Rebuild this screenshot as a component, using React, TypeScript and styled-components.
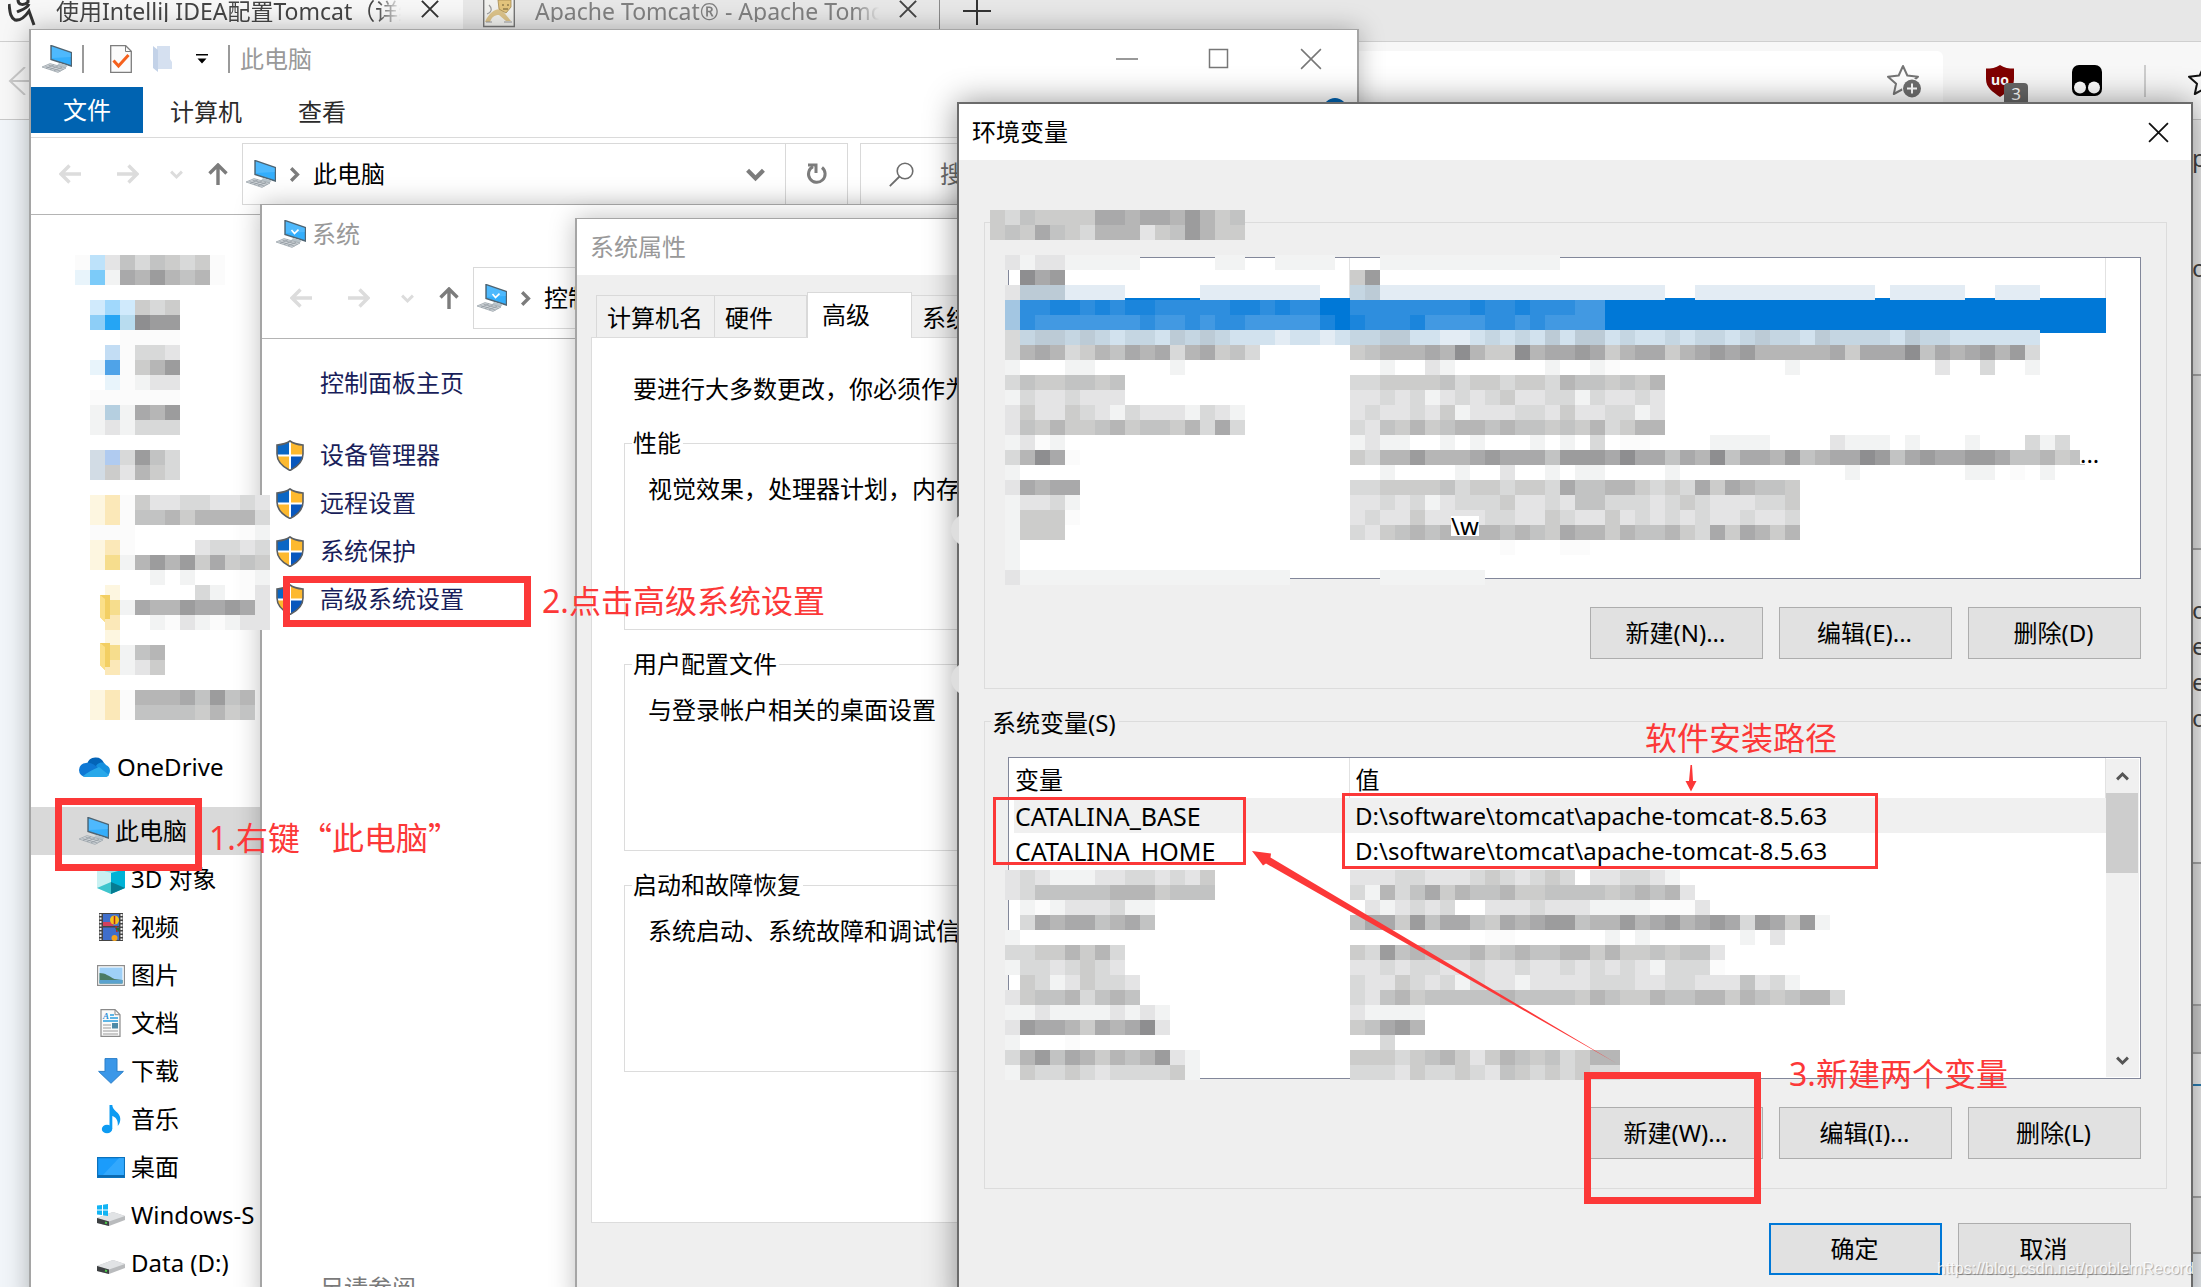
import React from 'react';
import styled, { createGlobalStyle, css } from 'styled-components';

const RED = '#fc3838';
const UI_FONT = '"Noto Sans", "Noto Sans CJK SC", sans-serif';

const GlobalStyle = createGlobalStyle`
  *, *::before, *::after { box-sizing: border-box; }
  html, body { margin: 0; height: 100%; overflow: hidden; }
  #root { height: 100%; }
  body { font-family: ${UI_FONT}; font-size: 24px; line-height: 32px; color: #000; }
  button, input { font: inherit; color: inherit; }
`;

const Desktop = styled.div`
  position: relative;
  min-height: 100vh;
  overflow: hidden;
  background: #f1f5f9;
`;

const IconButton = styled.button<{ $w?: number }>`
  display: flex;
  flex: none;
  align-items: center;
  justify-content: center;
  width: ${(p) => (p.$w ? `${p.$w}px` : 'auto')};
  padding: 0;
  border: 0;
  background: none;
`;

/* ---------- Browser behind the windows ---------- */

const Browser = styled.div`
  display: flex;
  flex-direction: column;
  height: 100vh;
`;

const TabBar = styled.div`
  display: flex;
  flex: none;
  height: 42px;
  background: #e7e7e7;
  border-bottom: 1px solid #cfcfcf;
`;

const Tab = styled.div<{ $active?: boolean }>`
  display: flex;
  align-items: flex-start;
  width: ${(p) => (p.$active ? '463px' : '477px')};
  padding: ${(p) => (p.$active ? '0 24px 0 8px' : '0 22px 0 20px')};
  gap: 20px;
  background: ${(p) => (p.$active ? '#f7f7f7' : 'transparent')};
  color: ${(p) => (p.$active ? '#444' : '#808080')};
  border-right: ${(p) => (p.$active ? '0' : '1px solid #8a8a8a')};
  svg { flex: none; }
`;

const TabTitle = styled.span`
  flex: 1;
  overflow: hidden;
  white-space: nowrap;
  font-size: 23px;
  line-height: 22px;
  mask-image: linear-gradient(to right, #000 93%, transparent 100%);
`;

const AddressRow = styled.div`
  display: flex;
  flex: none;
  align-items: center;
  height: 78px;
  padding-left: 8px;
  background: #f7f7f7;
  border-bottom: 1px solid #c8c8c8;
`;

const AddressField = styled.div`
  display: flex;
  flex: 1;
  align-items: center;
  justify-content: flex-end;
  height: 60px;
  margin-left: 80px;
  padding-right: 22px;
  border-radius: 6px;
  background: #fff;
`;

const Extensions = styled.div`
  display: flex;
  flex: none;
  align-items: center;
  gap: 42px;
  width: 258px;
  padding-left: 43px;
  overflow: hidden;
`;

const ExtensionDivider = styled.span`
  flex: none;
  width: 2px;
  height: 32px;
  background: #cdcdcd;
`;

const PageBody = styled.div`
  display: flex;
  flex: 1;
  justify-content: flex-end;
`;

const PageEdge = styled.div`
  display: flex;
  flex-direction: column;
  width: 9px;
  overflow: hidden;
  color: #444;
`;

const EdgeBlock = styled.div<{ $h: number; $bg?: string; $blue?: boolean }>`
  flex: none;
  height: ${(p) => p.$h}px;
  line-height: 36px;
  background: ${(p) => p.$bg ?? '#e6e6e6'};
  border-bottom: 2px solid ${(p) => (p.$blue ? '#2b7fb5' : '#a8a8a8')};
`;

const EdgeText = styled.div`
  height: 36px;
`;

const EdgeGap = styled.div<{ $h: number }>`
  height: ${(p) => p.$h}px;
`;

/* ---------- Windows ---------- */

const windowBase = css`
  position: absolute;
  display: flex;
  flex-direction: column;
  background: #fff;
  isolation: isolate;
`;

const ExplorerWindow = styled.section`
  ${windowBase}
  left: 29px;
  top: 29px;
  width: 1330px;
  bottom: -20px;
  border: 2px solid #a5a5a5;
  border-top-width: 1px;
  box-shadow: 0 0 24px rgba(0, 0, 0, 0.28);
`;

const SystemWindow = styled.section`
  ${windowBase}
  left: 260px;
  top: 204px;
  width: 1080px;
  bottom: -20px;
  border: 2px solid #a5a5a5;
  border-top-width: 1px;
  box-shadow: 0 0 24px rgba(0, 0, 0, 0.25);
  overflow: hidden;
`;

const PropertiesWindow = styled.section`
  ${windowBase}
  left: 575px;
  top: 218px;
  width: 660px;
  bottom: -20px;
  border: 2px solid #a5a5a5;
  border-top-width: 1px;
  background: #efefef;
  box-shadow: 0 0 24px rgba(0, 0, 0, 0.25);
`;

const EnvironmentWindow = styled.section`
  ${windowBase}
  left: 957px;
  right: 8px;
  top: 102px;
  min-height: 1205px;
  border: 2px solid #6b6b6b;
  background: #efefef;
  box-shadow: 0 0 30px rgba(0, 0, 0, 0.42);
`;

const ExplorerTitle = styled.header`
  display: flex;
  flex: none;
  align-items: center;
  height: 57px;
  padding: 0 35px 0 11px;
  color: #999;
`;

const TitleRule = styled.span<{ $before: number; $after: number }>`
  width: 2px;
  height: 28px;
  margin: 0 ${(p) => p.$after}px 0 ${(p) => p.$before}px;
  background: #9a9a9a;
`;

const WindowControls = styled.div`
  display: flex;
  gap: 70px;
  margin-left: auto;
`;

const Ribbon = styled.nav`
  display: flex;
  flex: none;
  align-items: center;
  height: 51px;
  padding-bottom: 4px;
  border-bottom: 1px solid #dadada;
`;

const FileTab = styled.button`
  width: 112px;
  height: 46px;
  padding: 0;
  border: 0;
  background: #0063b1;
  color: #fff;
`;

const RibbonTab = styled.button`
  padding: 4px 0 0;
  margin-left: 27px;
  margin-right: 29px;
  border: 0;
  background: none;
  color: #2b2b2b;
`;

const HelpDot = styled.button`
  width: 24px;
  height: 24px;
  margin: 0 10px 0 auto;
  padding: 0;
  border: 0;
  border-radius: 50%;
  background: #0063b1;
`;

const NavBar = styled.div`
  display: flex;
  flex: none;
  align-items: center;
  height: 77px;
  padding: 0 0 4px 28px;
  border-bottom: 1px solid #b4b4b4;
`;

const NavArrows = styled.div`
  display: flex;
  align-items: center;
  width: 183px;
  svg { flex: none; }
`;

const NavSlot = styled(IconButton)<{ $gap: number }>`
  margin-right: ${(p) => p.$gap}px;
`;

const PathBox = styled.div<{ $w: number }>`
  display: flex;
  flex: none;
  align-items: center;
  width: ${(p) => p.$w}px;
  height: 62px;
  padding-left: 3px;
  gap: 11px;
  border: 1px solid #d9d9d9;
  white-space: nowrap;
`;

const PathEnd = styled.div`
  display: flex;
  align-items: center;
  height: 100%;
  margin-left: auto;
`;

const RefreshCell = styled(IconButton)`
  width: 62px;
  height: 100%;
  margin-left: 20px;
  border-left: 1px solid #d9d9d9;
`;

const SearchBox = styled.label`
  display: flex;
  flex: 1;
  align-items: center;
  height: 62px;
  margin-left: 12px;
  padding-left: 28px;
  gap: 26px;
  border: 1px solid #d9d9d9;
  input { flex: 1; border: 0; padding: 0; outline: 0; background: none; }
  input::placeholder { color: #6d6d6d; opacity: 1; }
`;

const Sidebar = styled.nav`
  display: flex;
  flex-direction: column;
  width: 231px;
  padding-top: 528px;
`;

const SidebarItem = styled.a<{ $level: number; $selected?: boolean }>`
  display: flex;
  flex: none;
  align-items: center;
  height: 48px;
  margin-bottom: ${(p) => (p.$level === 0 ? 16 : 0)}px;
  padding-left: ${(p) => (p.$level === 2 ? 66 : 48)}px;
  gap: 6px;
  color: #000;
  text-decoration: none;
  white-space: nowrap;
  overflow: hidden;
  background: ${(p) => (p.$selected ? '#d9d9d9' : 'transparent')};
  svg { flex: none; }
`;

const SystemTitle = styled.header`
  display: flex;
  flex: none;
  align-items: center;
  height: 57px;
  padding-left: 14px;
  gap: 6px;
  color: #999;
`;

const SystemLinks = styled.nav`
  display: flex;
  flex-direction: column;
  padding-left: 14px;
`;

const SystemLink = styled.a<{ $home?: boolean }>`
  display: flex;
  align-items: center;
  height: 48px;
  margin: ${(p) => (p.$home ? '20px 0 24px 44px' : '0')};
  gap: 16px;
  color: #191e5a;
  text-decoration: none;
`;

const SeeAlso = styled.div`
  margin: 649px 0 0 58px;
  color: #7a7a7a;
`;

const DialogTitle = styled.header<{ $muted?: boolean }>`
  display: flex;
  flex: none;
  align-items: center;
  justify-content: space-between;
  height: 56px;
  padding: 0 22px 0 13px;
  background: #fff;
  color: ${(p) => (p.$muted ? '#999' : '#000')};
`;

const TabStrip = styled.div`
  display: flex;
  align-items: flex-end;
  height: 62px;
  padding-left: 19px;
`;

const PropTab = styled.button<{ $active?: boolean; $w: number }>`
  flex: none;
  width: ${(p) => p.$w}px;
  height: ${(p) => (p.$active ? 46 : 42)}px;
  margin-bottom: ${(p) => (p.$active ? -1 : 0)}px;
  padding: ${(p) => (p.$active ? '0 0 2px 14px' : '2px 0 0 10px')};
  border: 1px solid #d9d9d9;
  border-bottom: 0;
  border-left-width: ${(p) => (p.$active ? 1 : 0)}px;
  background: ${(p) => (p.$active ? '#fff' : '#f0f0f0')};
  text-align: left;
  white-space: nowrap;
  overflow: hidden;
  z-index: 1;
  &:first-child { border-left-width: 1px; }
`;

const PropPanel = styled.div`
  margin: 0 14px;
  height: 886px;
  padding: 35px 32px 0;
  border: 1px solid #dcdcdc;
  background: #fff;
  white-space: nowrap;
  p { margin: 0 0 22px 9px; }
`;

const PropGroup = styled.fieldset`
  min-width: 0;
  height: 203px;
  margin: 0 0 18px;
  padding: 14px 0 0 23px;
  border: 1px solid #dcdcdc;
  overflow: hidden;
  legend { margin-left: -16px; padding: 0 2px 0 1px; }
`;

const EnvBody = styled.div`
  display: flex;
  flex-direction: column;
  padding: 62px 24px 32px 25px;
`;

const VariableGroup = styled.fieldset<{ $titled?: boolean }>`
  display: flex;
  flex-direction: column;
  min-width: 0;
  margin: ${(p) => (p.$titled ? '16px 0 0' : '0')};
  padding: ${(p) => (p.$titled ? '20px 25px 29px 23px' : '34px 25px 29px 23px')};
  border: 1px solid #dcdcdc;
  legend { margin-left: -17px; padding: 4px 3px 0 1px; line-height: 28px; }
`;

const ListBox = styled.div`
  display: flex;
  height: 322px;
  margin-bottom: 28px;
  padding: 0 1px 1px 5px;
  border: 1px solid #82879a;
  background: #fff;
`;

const ListMain = styled.div`
  flex: 1;
`;

const VariableTable = styled.table`
  width: 100%;
  border-collapse: collapse;
  table-layout: fixed;
  text-align: left;
  white-space: nowrap;
  thead th { height: 40px; padding: 4px 0 0 1px; border-right: 1px solid #e2e2e2; font-weight: 400; }
  thead th:first-child { width: 335px; }
  thead th + th, td { padding-left: 6px; }
  tbody th { padding: 0 0 0 1px; font-weight: 400; font-size: 25px; }
  td { padding-top: 0; padding-bottom: 0; }
`;

const VariableRow = styled.tr<{ $tone?: string }>`
  height: 35px;
  background: ${(p) => p.$tone ?? 'transparent'};
`;

const ScrollTrack = styled.div<{ $visible: boolean }>`
  display: flex;
  flex-direction: column;
  justify-content: space-between;
  width: 33px;
  margin-top: 1px;
  background: ${(p) => (p.$visible ? '#f0f0f0' : 'transparent')};
`;

const ScrollThumb = styled.div`
  width: 32px;
  height: 80px;
  margin-bottom: auto;
  background: #cdcdcd;
`;

const ScrollButton = styled(IconButton)`
  width: 32px;
  height: 34px;
`;

const ButtonRow = styled.div<{ $footer?: boolean }>`
  display: flex;
  justify-content: flex-end;
  gap: 16px;
  margin: ${(p) => (p.$footer ? '34px 36px 0 0' : '0')};
`;

const DialogButton = styled.button<{ $primary?: boolean }>`
  width: 173px;
  height: 52px;
  padding: 0 2px 0 0;
  border: ${(p) => (p.$primary ? '2px solid #0078d7' : '1px solid #adadad')};
  background: #e1e1e1;
`;

/* ---------- Marks drawn over the windows ---------- */

const MarkLayer = styled.div`
  position: absolute;
  inset: 0;
  pointer-events: none;
`;

const MarkBox = styled.div<{ $x: number; $y: number; $w: number; $h: number; $thick?: boolean }>`
  position: absolute;
  left: ${(p) => p.$x}px;
  top: ${(p) => p.$y}px;
  width: ${(p) => p.$w}px;
  height: ${(p) => p.$h}px;
  border: ${(p) => (p.$thick ? 7 : 3)}px solid ${RED};
`;

const MarkText = styled.div<{ $x: number; $y: number }>`
  position: absolute;
  left: ${(p) => p.$x}px;
  top: ${(p) => p.$y}px;
  font-size: 32px;
  line-height: 40px;
  color: ${RED};
  white-space: nowrap;
`;

const WideQuote = styled.span`
  font-family: "Noto Sans CJK SC", sans-serif;
`;

const MarkSvg = styled.svg<{ $x: number; $y: number }>`
  position: absolute;
  left: ${(p) => p.$x}px;
  top: ${(p) => p.$y}px;
`;

const Fragment = styled.span<{ $x: number; $y: number }>`
  position: absolute;
  left: ${(p) => p.$x}px;
  top: ${(p) => p.$y}px;
  background: #fff;
  line-height: 20px;
`;

const Watermark = styled.div`
  position: absolute;
  right: 8px;
  bottom: 6px;
  width: 256px;
  overflow: hidden;
  font-family: "Liberation Sans", sans-serif;
  font-size: 16px;
  line-height: 24px;
  color: rgba(255, 255, 255, 0.85);
  text-shadow: 1px 1px 1px rgba(0, 0, 0, 0.3);
  white-space: nowrap;
`;

/* ---------- Mosaic ---------- */

const SHADES: Record<string, string> = {
  '0': '#8e8e90', '1': '#9c9c9d', '2': '#a9a9aa', '3': '#b6b6b6', '4': '#c2c3c3',
  '5': '#cccccb', '6': '#d8d9d9', '7': '#e4e4e5', '8': '#f2f3f3', '9': '#fbfbfb',
  a: '#e8f4fb', b: '#bde2fa', c: '#7ccbf9', d: '#25a5f4', e: '#d0eafc', f: '#a0d8fc',
  g: '#8dcef7', h: '#b8dcef', i: '#c3ddf4', j: '#4fa3e8', k: '#b5cfe0', l: '#b0cbf0',
  m: '#d2dce5', n: '#fdf6e0', o: '#fbe8b8', q: '#f6dd8d', r: '#0078d7', s: '#1b85dc',
  t: '#2e8ede', u: '#4299e2', v: '#a3c6e2', x: '#c5d6e2', y: '#d2e2ee', z: '#bccbd6',
  A: '#e3ecf4',
};
const CELL = 15;

function Mosaic({ x, y, rows }: { x: number; y: number; rows: string[] }) {
  const cols = Math.max(...rows.map((r) => r.length));
  return (
    <MarkSvg $x={x} $y={y} width={cols * CELL} height={rows.length * CELL} shapeRendering="crispEdges" aria-hidden="true">
      {rows.flatMap((row, r) =>
        [...row].map((c, i) =>
          c === '.' ? null : <rect key={`${r}-${i}`} x={i * CELL} y={r * CELL} width={CELL} height={CELL} fill={SHADES[c]} />,
        ),
      )}
    </MarkSvg>
  );
}

const SIDEBAR_MOSAIC = [
  '9b74645659', 'ac82313439', '', '.efe565', '.gdh011', '...9999', '..i9667', '.aj9531', '..a9877',
  '.999999', '.8k8231', '.878666', '', '.ml6146', '.m57356', '', '.no9577667767', '.no9443533336',
  '.999.......98', '.no9....76676', '.nq8313152545', '.....8.8...98', '..n.....68.97', '..q8233122127',
  '..o..89789877', '..n', '..q843', '..o875', '', '.no933324143', '.no944445354',
];

const LEGEND_MOSAIC = ['56455552232231354', '54524563337541355'];

const USER_NAMES = [
  '787788888.....88..8888', '.021', '7zzzAAAA.....AAAAAAAA', 'vttsststsstttttsststtrr', 'vtuuuuuuutuututtuuuuusr',
  '6xzzxzxyxxyzxzxyyyAyyAy', '63236534232632546', '8...88.....8', '64554454', '86776777', '7577567867778678',
  '7453554354453626', '8798', '63029', '8', '72322', '87768', '85559', '8555', '8', '8', '7888888888888888888',
];

const USER_VALUES = [
  '..888888888888', '51', 'xzAAAAAAAAAAAAAAAAAAA..AAAAAAAAAAAA.AAAAA..AAA', 'ttttttttsttstttuu', 'stttsuuuuttutuuuu',
  'xxzzyyAAyxyxyzyzzyxyyxyxxyxzxxyzxxxxyzxxyyyyyy', '5433323035503221253225321213333325222042321316',
  '..8..78......8..89...........8.........7..6..8', '665555465565563445453', '776768767657766867767', '767767587776675776687',
  '674535433434454536533', '8788..8.8...8.8.6.99....8888....7888.8...8...686',
  '5633133321222411120224230422314322014212211244354', '..8....8..7..8.88....8...........8.......88.9.8',
  '665555465565562443356562523445', '776768766657767446667656777665', '767757777667756775767676776776',
  '675434333343452335344356252353', '..........9...99', '', '..8888888',
];

const SYSTEM_NAMES = [
  '76788877667675', '76444443335444', '.898777688', '.623224324', '8', '66553536', '86676567', '.56875667',
  '754436434', '88788887878', '71223523207', '8...9', '6314235343178', '8566567666658',
];

const SYSTEM_VALUES = [
  '777667776567656.776678', '68364253443554444543437', '.787676..777677788889997', '42251422452321143313213212612518',
  '.........99......8.8......8.7', '5614344435434433535545447', '7767667767767767676786669',
  '677567686778777766677667774768', '674354444434444534553443353454336', '78888', '54213', '..6',
  '555654357534546533', '666756656745656566',
];

/* ---------- Icons ---------- */

const PcIcon = ({ check }: { check?: boolean }) => (
  <svg width="30" height="28" viewBox="0 0 30 28" aria-hidden="true">
    <path d="M9 0.5 29.5 7.5V21L9 14.5Z" fill="#34aefb" stroke="#4f6472" strokeWidth="1.4" />
    <path d="M10 1.5 28.7 8v4L10 13Z" fill="#64c3ff" opacity="0.55" />
    <path d="m17 18 9 2.5-3 3-8-3Z" fill="#b9c4ca" />
    <path d="M0 22 8 18.6 24 23 16 27.4Z" fill="#cfd4d8" stroke="#9fa8ae" strokeWidth="0.8" />
    <path d="m3.5 21.6 15 4.4M6.5 20.2l15 4.2M4 23.4l8-3.6M8 24.6l8-3.6M12 25.8l8-3.6" stroke="#8e979d" strokeWidth="0.7" />
    {check && <path d="m15.5 10 3 3.6 4-4" fill="none" stroke="#fff" strokeWidth="1.6" />}
  </svg>
);

const CloseIcon = ({ size, color, width = 2 }: { size: number; color: string; width?: number }) => (
  <svg width={size} height={size} viewBox="0 0 20 20" aria-hidden="true">
    <path d="M1 1 19 19M19 1 1 19" stroke={color} strokeWidth={width} fill="none" />
  </svg>
);

const ArrowIcon = ({ dir }: { dir: 'left' | 'right' | 'up' }) => {
  const color = dir === 'up' ? '#7c7c7c' : '#dcdcdc';
  const turn = dir === 'left' ? 0 : dir === 'right' ? 180 : 90;
  return (
    <svg width="22" height="22" viewBox="0 0 22 22" aria-hidden="true">
      <path d="M22 11H2.5M10.5 2.500 2 11l8.500 8.500" transform={`rotate(${turn} 11 11)`} fill="none" stroke={color} strokeWidth="3.4" />
    </svg>
  );
};

const Chevron = ({ dir, color = '#7c7c7c', size = 18 }: { dir: 'down' | 'up' | 'right'; color?: string; size?: number }) => {
  const turn = dir === 'down' ? 0 : dir === 'up' ? 180 : -90;
  return (
    <svg width={size} height={size} viewBox="0 0 18 18" aria-hidden="true">
      <path d="m1.500 5 7.500 7.500L16.500 5" transform={`rotate(${turn} 9 9)`} fill="none" stroke={color} strokeWidth="4" />
    </svg>
  );
};

const ShieldIcon = () => (
  <svg width="28" height="31" viewBox="0 0 28 31" aria-hidden="true">
    <clipPath id="uac"><path d="M14 1c4 3 8 3.600 13 4v9c0 8-6 13-13 16.500C7 27 1 22 1 14V5c5-.4 9-1 13-4Z" /></clipPath>
    <g clipPath="url(#uac)">
      <path d="M0 0h14v15H0Z" fill="#0a66c4" />
      <path d="M14 0h14v15H14Z" fill="#fdb92f" />
      <path d="M0 15h14v16H0Z" fill="#fdb92f" />
      <path d="M14 15h14v16H14Z" fill="#0857bd" />
      <path d="M14 0v31M0 15.500h28" stroke="#fff" strokeWidth="2" />
    </g>
    <path d="M14 1c4 3 8 3.600 13 4v9c0 8-6 13-13 16.500C7 27 1 22 1 14V5c5-.4 9-1 13-4Z" fill="none" stroke="#5b5f63" strokeWidth="1.600" />
  </svg>
);

const StarIcon = ({ plus }: { plus?: boolean }) => (
  <svg width="34" height="34" viewBox="0 0 34 34" aria-hidden="true">
    <path
      d="m16 2 4.300 9.500 10.700 1.200-8 7 2.200 10.300L16 25l-9.200 5 2.200-10.300-8-7 10.700-1.200Z"
      fill="none" stroke={plus ? '#767676' : '#111'} strokeWidth="2" strokeLinejoin="round"
    />
    {plus && (
      <>
        <circle cx="25" cy="24.500" r="10" fill="#fff" />
        <circle cx="25" cy="24.500" r="9" fill="#6f6f6f" />
        <path d="M25 19.500v10M20 24.500h10" stroke="#fff" strokeWidth="2" />
      </>
    )}
  </svg>
);

const SiteIcon = () => (
  <svg width="28" height="26" viewBox="0 0 28 26" aria-hidden="true">
    <path d="M1 4c1 8 1 13 6 16 6 1 10-3 14-9l5 14M9 12c4-2 10-3 12-8M10 0c0 5 6 6 10 2V0" fill="none" stroke="#333" strokeWidth="3" />
  </svg>
);

const TomcatIcon = () => (
  <svg width="32" height="28" viewBox="0 0 32 28" aria-hidden="true">
    <path d="M.7 0v26.500h30.600V0" fill="#f1f1ee" stroke="#777" strokeWidth="1.400" />
    <path d="M2 22c4-9 9-13 16-13l10 12h-5l-7-6c-5 0-7 2-9 7Z" fill="#dcc38a" />
    <path d="M15 0h13v7l-5 6-7-4Z" fill="#e3c47c" stroke="#a58a50" strokeWidth="0.800" />
    <path d="M19 5h2M24 5h2M20 9h5" stroke="#6b5a33" strokeWidth="1.200" />
    <path d="M4 14c4-1 6-5 2-9M3 22h6M21 22h8" fill="none" stroke="#9a9a9a" strokeWidth="1.200" />
  </svg>
);

const UblockIcon = () => (
  <svg width="44" height="42" viewBox="0 0 44 42" aria-hidden="true">
    <path d="M14 5c4 3 9 3.500 14 3.500V19c0 9-7 13-14 18C7 32 0 28 0 19V8.500C5 8.500 10 8 14 5Z" fill="#800000" />
    <text x="14" y="25" fill="#fff" fontSize="14" fontWeight="700" fontFamily="Noto Sans" textAnchor="middle">uo</text>
    <rect x="18" y="23" width="24" height="22" rx="4" fill="#666" />
    <text x="30" y="40" fill="#fff" fontSize="17" fontFamily="Noto Sans" textAnchor="middle">3</text>
  </svg>
);

const MonkeyIcon = () => (
  <svg width="30" height="31" viewBox="0 0 30 31" aria-hidden="true">
    <rect width="30" height="31" rx="7" fill="#000" />
    <circle cx="8" cy="22.500" r="6" fill="#fff" />
    <circle cx="22" cy="22.500" r="6" fill="#fff" />
  </svg>
);

const CheckPageIcon = () => (
  <svg width="22" height="28" viewBox="0 0 22 28" aria-hidden="true">
    <path d="M.7.7h15l5.600 5.600v21H.7Z" fill="#fbfbfb" stroke="#7d7d7d" strokeWidth="1.300" />
    <path d="M15.500.7v5.800h5.800" fill="none" stroke="#7d7d7d" />
    <path d="m3.500 15.500 5 5.500L18.500 10" fill="none" stroke="#f5601c" strokeWidth="3" />
  </svg>
);

const PaleFolderIcon = () => (
  <svg width="20" height="28" viewBox="0 0 20 28" aria-hidden="true">
    <path d="M4 1h13v13l2 3v7H4Z" fill="#d5e0f0" />
    <path d="m0 1 5 4v22l-5-4Z" fill="#c3d2e8" />
  </svg>
);

const MenuCaretIcon = () => (
  <svg width="12" height="10" viewBox="0 0 12 10" aria-hidden="true">
    <path d="M0 0h12v1.500H0ZM1.500 4.500h9L6 9.500Z" fill="#000" />
  </svg>
);

const RefreshIcon = () => (
  <svg width="22" height="22" viewBox="0 0 22 22" aria-hidden="true">
    <path d="M16 4.500A8.300 8.300 0 1 1 7 3.600" fill="none" stroke="#7c7c7c" strokeWidth="3" />
    <path d="M2 2h8v8" fill="none" stroke="#7c7c7c" strokeWidth="3" />
  </svg>
);

const SearchIcon = () => (
  <svg width="25" height="25" viewBox="0 0 25 25" aria-hidden="true">
    <circle cx="16" cy="9" r="7.800" fill="none" stroke="#6d6d6d" strokeWidth="1.600" />
    <path d="M10.500 14.500.8 24.200" stroke="#6d6d6d" strokeWidth="1.800" />
  </svg>
);

const CloudIcon = () => (
  <svg width="32" height="22" viewBox="0 0 32 22" aria-hidden="true">
    <path d="M8 8a9 9 0 0 1 17-1l-7 6Z" fill="#0364b8" />
    <path d="M7 21a7 7 0 0 1 0-14c5-1 9 2 13 6L8 21Z" fill="#0f78d4" />
    <path d="M17 10c2-4 8-5 10-1a6.300 6.300 0 0 1-1 12Z" fill="#1490df" />
    <path d="M4 20c5-4 11-7 16-9l10 8c-1 1.500-2 2-4 2H8c-2 0-3-.3-4-1Z" fill="#28a8ea" />
  </svg>
);

const CubeIcon = () => (
  <svg width="28" height="30" viewBox="0 0 28 30" aria-hidden="true">
    <path d="M0 5 14 0l14 5-14 5Z" fill="#8be3ec" />
    <path d="M0 5 14 9v21L0 24Z" fill="#c9f1f2" />
    <path d="M14 9 28 5v19l-14 6Z" fill="#00b2d6" />
    <path d="m0 24 14-6v12Z" fill="#3fc5cd" />
    <path d="m14 18 14 6-14 6Z" fill="#067c91" />
  </svg>
);

const VideoIcon = () => (
  <svg width="28" height="28" viewBox="0 0 28 28" aria-hidden="true">
    <path d="M2 0h24v28H2Z" fill="#444" />
    <path d="M3.500 1v26M24.500 1v26" stroke="#eee" strokeWidth="2" strokeDasharray="2 1.500" />
    <path d="M6 1h16v12H6ZM6 14.500h16V27H6Z" fill="#3f6ecb" />
    <path d="M6 9h8l3 4H6Z" fill="#d2405d" />
    <circle cx="17.500" cy="7" r="4.500" fill="#f5c21b" />
    <circle cx="17.500" cy="25" r="3" fill="#f5a21b" />
    <path d="M17.500 3v8M19 13l1 6" stroke="#b3281e" strokeWidth="1.500" />
    <path d="M18 15h4v4Z" fill="#1f6b33" />
  </svg>
);

const PictureIcon = () => (
  <svg width="28" height="21" viewBox="0 0 28 21" aria-hidden="true">
    <path d="M.6.6h26.800v19.800H.6Z" fill="#fff" stroke="#8e8e8e" strokeWidth="1.200" />
    <path d="M2.500 2.500h23v16h-23Z" fill="#9fd0f7" />
    <path d="M2.500 8c6 0 9 3 15 6l8 1v3.500h-23Z" fill="#4b7a62" />
    <path d="M2.500 15h23v3.500h-23Z" fill="#5aa2cf" />
  </svg>
);

const DocIcon = () => (
  <svg width="28" height="28" viewBox="0 0 28 28" aria-hidden="true">
    <path d="M4 .7h14l5 5v21.600H4Z" fill="#fafafa" stroke="#8a8a8a" strokeWidth="1.200" />
    <path d="M18 .7v5h5" fill="none" stroke="#8a8a8a" />
    <text x="6" y="10" fontSize="9" fontStyle="italic" fontWeight="700" fontFamily="Liberation Serif" fill="#2a8fd8">A</text>
    <path d="M13 6h4M13 9h8M6 12h15" stroke="#2a9ee0" strokeWidth="1.300" />
    <path d="M6 16h8M6 19h8M6 22h15M6 25h15" stroke="#9a9a9a" />
    <path d="M15 14h6v5.500h-6Z" fill="#4e8aa8" />
  </svg>
);

const DownloadIcon = () => (
  <svg width="28" height="26" viewBox="0 0 28 26" aria-hidden="true">
    <path d="M8 .6h12v12.800h6.400L14 25.300 1.600 13.400H8Z" fill="#3b97e8" stroke="#2b7fc9" />
  </svg>
);

const MusicIcon = () => (
  <svg width="28" height="29" viewBox="0 0 28 29" aria-hidden="true">
    <ellipse cx="10" cy="24" rx="5.200" ry="4.300" fill="#0d9bf2" />
    <path d="M12.500 0h2.800c0 6 8 7 8 14 0 3-1 5-2.500 7 .5-6-2-9-5.500-10v13h-2.800Z" fill="#0d9bf2" />
  </svg>
);

const DesktopIcon = () => (
  <svg width="28" height="21" viewBox="0 0 28 21" aria-hidden="true">
    <path d="M.6.6h26.800v19.800H.6Z" fill="#1b9cfb" stroke="#0b72bd" strokeWidth="1.200" />
    <path d="M22 1h5v17H6Z" fill="#43b1ff" opacity="0.600" />
    <path d="M1 19h26" stroke="#095c9c" strokeWidth="1.500" />
  </svg>
);

const DriveIcon = ({ windows }: { windows?: boolean }) => (
  <svg width="28" height="24" viewBox="0 0 28 24" aria-hidden="true">
    <path d="m0 15 16-6 12 4v4L12 23 0 20Z" fill="#b9bbbd" />
    <path d="m0 15 16-6 12 4-16 5.500Z" fill="#e1e3e5" />
    <path d="m0 15 12 3.500V23L0 20Z" fill="#3d4042" />
    <path d="m8 19.500 2 .6" stroke="#4bd04b" strokeWidth="2" />
    {windows && <path d="M0 2.500 5 2v4.500H0ZM6 1.800 11 1v5.500H6ZM0 7.500h5V12l-5-.5ZM6 7.500h5V13l-5-.8Z" fill="#12b4f4" />}
  </svg>
);

/* ---------- Parts ---------- */

function NavControls() {
  return (
    <NavArrows>
      <NavSlot $gap={36} aria-label="后退"><ArrowIcon dir="left" /></NavSlot>
      <NavSlot $gap={31} aria-label="前进"><ArrowIcon dir="right" /></NavSlot>
      <NavSlot $gap={24} aria-label="最近浏览的位置"><Chevron dir="down" color="#dcdcdc" size={13} /></NavSlot>
      <NavSlot $gap={0} aria-label="向上"><ArrowIcon dir="up" /></NavSlot>
    </NavArrows>
  );
}

type Row = { name: string; value: string; tone?: string };

function VariableList({ label, headings, rows, scroll }: { label: string; headings: [string, string]; rows: Row[]; scroll: boolean }) {
  return (
    <ListBox>
      <ListMain>
        <VariableTable aria-label={label}>
          <thead>
            <tr><th scope="col">{headings[0]}</th><th scope="col">{headings[1]}</th></tr>
          </thead>
          <tbody>
            {rows.map((r, i) => (
              <VariableRow key={i} $tone={r.tone}>
                <th scope="row">{r.name}</th>
                <td>{r.value}</td>
              </VariableRow>
            ))}
          </tbody>
        </VariableTable>
      </ListMain>
      <ScrollTrack $visible={scroll}>
        {scroll && (
          <>
            <ScrollButton aria-label="向上滚动"><Chevron dir="up" color="#555" size={13} /></ScrollButton>
            <ScrollThumb />
            <ScrollButton aria-label="向下滚动"><Chevron dir="down" color="#555" size={13} /></ScrollButton>
          </>
        )}
      </ScrollTrack>
    </ListBox>
  );
}

const PLACES: { label: string; icon: React.ReactNode; level: number; selected?: boolean }[] = [
  { label: 'OneDrive', icon: <CloudIcon />, level: 0 },
  { label: '此电脑', icon: <PcIcon />, level: 1, selected: true },
  { label: '3D 对象', icon: <CubeIcon />, level: 2 },
  { label: '视频', icon: <VideoIcon />, level: 2 },
  { label: '图片', icon: <PictureIcon />, level: 2 },
  { label: '文档', icon: <DocIcon />, level: 2 },
  { label: '下载', icon: <DownloadIcon />, level: 2 },
  { label: '音乐', icon: <MusicIcon />, level: 2 },
  { label: '桌面', icon: <DesktopIcon />, level: 2 },
  { label: 'Windows-S', icon: <DriveIcon windows />, level: 2 },
  { label: 'Data (D:)', icon: <DriveIcon />, level: 2 },
];

const SYSTEM_LINKS = ['设备管理器', '远程设置', '系统保护', '高级系统设置'];

const PROP_GROUPS = [
  { title: '性能', text: '视觉效果，处理器计划，内存使用' },
  { title: '用户配置文件', text: '与登录帐户相关的桌面设置' },
  { title: '启动和故障恢复', text: '系统启动、系统故障和调试信息' },
];

const CATALINA_PATH = 'D:\\software\\tomcat\\apache-tomcat-8.5.63';

export default function App() {
  return (
    <Desktop lang="zh-CN">
      <GlobalStyle />

      <Browser>
        <TabBar>
          <Tab $active>
            <SiteIcon />
            <TabTitle>使用IntelliJ IDEA配置Tomcat（详细）</TabTitle>
            <IconButton aria-label="关闭标签页"><CloseIcon size={18} color="#333" width={2.2} /></IconButton>
          </Tab>
          <Tab>
            <TomcatIcon />
            <TabTitle>Apache Tomcat® - Apache Tomcat 8</TabTitle>
            <IconButton aria-label="关闭标签页"><CloseIcon size={18} color="#444" width={2.2} /></IconButton>
          </Tab>
          <IconButton $w={74} aria-label="新建标签页">
            <svg width="28" height="42" viewBox="0 0 28 42" aria-hidden="true">
              <path d="M0 11h28M14 0v25" stroke="#333" strokeWidth="2" />
            </svg>
          </IconButton>
        </TabBar>
        <AddressRow>
          <IconButton aria-label="返回">
            <svg width="24" height="28" viewBox="0 0 24 28" aria-hidden="true">
              <path d="M24 14H2M17 0 2 14l15 14" fill="none" stroke="#c9c9c9" strokeWidth="2" />
            </svg>
          </IconButton>
          <AddressField>
            <IconButton aria-label="添加到收藏夹"><StarIcon plus /></IconButton>
          </AddressField>
          <Extensions>
            <IconButton $w={44} aria-label="uBlock Origin"><UblockIcon /></IconButton>
            <IconButton $w={30} aria-label="Tampermonkey"><MonkeyIcon /></IconButton>
            <ExtensionDivider />
            <IconButton aria-label="收藏夹"><StarIcon /></IconButton>
          </Extensions>
        </AddressRow>
        <PageBody>
          <PageEdge aria-hidden="true">
            <EdgeBlock $h={256} $bg="#eeeeee">
              <EdgeGap $h={20} /><EdgeText>p</EdgeText><EdgeGap $h={74} /><EdgeText>o</EdgeText>
            </EdgeBlock>
            <EdgeBlock $h={174} />
            <EdgeBlock $h={314} $bg="#f4f4f4">
              <EdgeGap $h={42} /><EdgeText>o</EdgeText><EdgeText>e</EdgeText><EdgeText>e</EdgeText><EdgeText>o</EdgeText>
            </EdgeBlock>
            <EdgeBlock $h={142} />
            <EdgeBlock $h={48} $bg="#d2d2d2" />
            <EdgeBlock $h={32} $bg="#f2f2f2" $blue />
            <EdgeBlock $h={112} $bg="#f2f2f2" />
            <EdgeBlock $h={56} />
          </PageEdge>
        </PageBody>
      </Browser>

      <ExplorerWindow aria-label="此电脑">
        <ExplorerTitle>
          <PcIcon />
          <TitleRule $before={10} $after={26} />
          <CheckPageIcon />
          <IconButton $w={62} aria-label="新建文件夹"><PaleFolderIcon /></IconButton>
          <IconButton $w={16} aria-label="自定义快速访问工具栏"><MenuCaretIcon /></IconButton>
          <TitleRule $before={18} $after={10} />
          <span>此电脑</span>
          <WindowControls>
            <IconButton aria-label="最小化"><svg width="22" height="22" aria-hidden="true"><path d="M0 11h22" stroke="#777" strokeWidth="1.500" /></svg></IconButton>
            <IconButton aria-label="最大化"><svg width="22" height="22" aria-hidden="true"><path d="M1.500 1.500h18v18h-18Z" fill="none" stroke="#777" strokeWidth="1.500" /></svg></IconButton>
            <IconButton aria-label="关闭"><CloseIcon size={22} color="#777" width={1.4} /></IconButton>
          </WindowControls>
        </ExplorerTitle>
        <Ribbon>
          <FileTab>文件</FileTab>
          <RibbonTab>计算机</RibbonTab>
          <RibbonTab>查看</RibbonTab>
          <HelpDot aria-label="帮助" />
        </Ribbon>
        <NavBar>
          <NavControls />
          <PathBox $w={606}>
            <PcIcon />
            <Chevron dir="right" size={15} />
            <span>此电脑</span>
            <PathEnd>
              <Chevron dir="down" size={19} />
              <RefreshCell aria-label="刷新"><RefreshIcon /></RefreshCell>
            </PathEnd>
          </PathBox>
          <SearchBox>
            <SearchIcon />
            <input type="text" placeholder="搜索" aria-label="搜索" />
          </SearchBox>
        </NavBar>
        <Sidebar>
          {PLACES.map((p) => (
            <SidebarItem key={p.label} href="#" $level={p.level} $selected={p.selected}>
              {p.icon}
              <span>{p.label}</span>
            </SidebarItem>
          ))}
        </Sidebar>
      </ExplorerWindow>

      <SystemWindow aria-label="系统">
        <SystemTitle><PcIcon check /><span>系统</span></SystemTitle>
        <NavBar>
          <NavControls />
          <PathBox $w={700}>
            <PcIcon check />
            <Chevron dir="right" size={15} />
            <span>控制面板</span>
          </PathBox>
        </NavBar>
        <SystemLinks>
          <SystemLink href="#" $home>控制面板主页</SystemLink>
          {SYSTEM_LINKS.map((label) => (
            <SystemLink key={label} href="#"><ShieldIcon />{label}</SystemLink>
          ))}
        </SystemLinks>
        <SeeAlso>另请参阅</SeeAlso>
      </SystemWindow>

      <PropertiesWindow aria-label="系统属性">
        <DialogTitle $muted>系统属性</DialogTitle>
        <TabStrip>
          <PropTab $w={119}>计算机名</PropTab>
          <PropTab $w={92}>硬件</PropTab>
          <PropTab $w={105} $active>高级</PropTab>
          <PropTab $w={120}>系统保护</PropTab>
        </TabStrip>
        <PropPanel>
          <p>要进行大多数更改，你必须作为管理员登录。</p>
          {PROP_GROUPS.map((g) => (
            <PropGroup key={g.title}>
              <legend>{g.title}</legend>
              {g.text}
            </PropGroup>
          ))}
        </PropPanel>
      </PropertiesWindow>

      <EnvironmentWindow role="dialog" aria-label="环境变量">
        <DialogTitle>
          <span>环境变量</span>
          <IconButton aria-label="关闭"><CloseIcon size={21} color="#111" width={1.7} /></IconButton>
        </DialogTitle>
        <EnvBody>
          <VariableGroup aria-label="用户变量">
            <VariableList label="用户变量" headings={['', '']} rows={[{ name: '', value: '', tone: '#0078d7' }]} scroll={false} />
            <ButtonRow>
              <DialogButton>新建(N)...</DialogButton>
              <DialogButton>编辑(E)...</DialogButton>
              <DialogButton>删除(D)</DialogButton>
            </ButtonRow>
          </VariableGroup>
          <VariableGroup $titled>
            <legend>系统变量(S)</legend>
            <VariableList
              label="系统变量"
              headings={['变量', '值']}
              rows={[
                { name: 'CATALINA_BASE', value: CATALINA_PATH, tone: '#f0f0f0' },
                { name: 'CATALINA_HOME', value: CATALINA_PATH },
              ]}
              scroll
            />
            <ButtonRow>
              <DialogButton>新建(W)...</DialogButton>
              <DialogButton>编辑(I)...</DialogButton>
              <DialogButton>删除(L)</DialogButton>
            </ButtonRow>
          </VariableGroup>
          <ButtonRow $footer>
            <DialogButton $primary>确定</DialogButton>
            <DialogButton>取消</DialogButton>
          </ButtonRow>
        </EnvBody>
      </EnvironmentWindow>

      <MarkLayer>
        <Mosaic x={75} y={255} rows={SIDEBAR_MOSAIC} />
        {[595, 643].map((y) => (
          <MarkSvg key={y} $x={100} $y={y} width="10" height="27" aria-hidden="true">
            <path d="M0 0h10v24H5v3L0 22Z" fill="#f3cf63" />
            <path d="m0 0 5 4v23l-5-5Z" fill="#fbe08a" />
          </MarkSvg>
        ))}
        <Mosaic x={990} y={210} rows={LEGEND_MOSAIC} />
        <Mosaic x={1005} y={255} rows={USER_NAMES} />
        <Mosaic x={1350} y={255} rows={USER_VALUES} />
        <Fragment $x={1451} $y={516}>\w</Fragment>
        <Fragment $x={2080} $y={444}>...</Fragment>
        <Mosaic x={1005} y={870} rows={SYSTEM_NAMES} />
        <Mosaic x={1350} y={870} rows={SYSTEM_VALUES} />
        {[516, 665].map((y) => (
          <MarkSvg key={y} $x={950} $y={y} width="9" height="28" aria-hidden="true">
            <path d="M9 0C4 4 1 8 1 14s3 10 8 14Z" fill="#dedede" />
          </MarkSvg>
        ))}

        <MarkBox $x={55} $y={798} $w={147} $h={73} $thick />
        <MarkText $x={209} $y={816}>1.右键<WideQuote>“</WideQuote>此电脑<WideQuote>”</WideQuote></MarkText>
        <MarkBox $x={283} $y={576} $w={248} $h={51} $thick />
        <MarkText $x={542} $y={581}>2.点击高级系统设置</MarkText>
        <MarkBox $x={993} $y={797} $w={253} $h={68} />
        <MarkBox $x={1342} $y={793} $w={536} $h={76} />
        <MarkText $x={1645} $y={718}>软件安装路径</MarkText>
        <MarkBox $x={1584} $y={1072} $w={177} $h={132} $thick />
        <MarkText $x={1789} $y={1054}>3.新建两个变量</MarkText>
        <MarkSvg $x={1250} $y={848} width="370" height="220" aria-hidden="true">
          <path d="M2 3 21 5.500 20.500 9.500 366 215 16 15.500 13 17.500Z" fill={RED} />
        </MarkSvg>
        <MarkSvg $x={1685} $y={765} width="12" height="27" aria-hidden="true">
          <path d="M5.500 0h1.500l1 16h3.500L6 26.500.5 16H4Z" fill={RED} />
        </MarkSvg>
        <Watermark>https://blog.csdn.net/problemRecord</Watermark>
      </MarkLayer>
    </Desktop>
  );
}
